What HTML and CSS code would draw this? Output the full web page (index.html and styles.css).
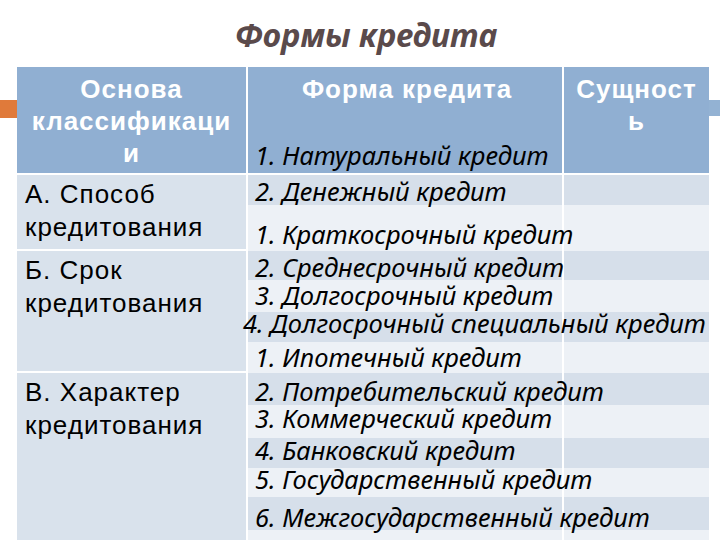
FILE: index.html
```html
<!DOCTYPE html>
<html lang="ru">
<head>
<meta charset="utf-8">
<title>Формы кредита</title>
<link rel="stylesheet" href="styles.css">
</head>
<body>
<div class="slide">
  <h1 class="title">Формы кредита</h1>
  <div class="table-wrap">
    <div class="deco deco-left"></div>
    <div class="deco deco-right"></div>
    <div class="grid">
      <div class="hd hd1">Основа<br>классификаци<br>и</div>
      <div class="hd hd2">
        <div class="hd-title">Форма кредита</div>
        <div class="item head-item">1. Натуральный кредит</div>
      </div>
      <div class="hd hd3">Сущност<br>ь</div>

      <div class="cat cat-a">А. Способ<br>кредитования</div>
      <div class="cat cat-b">Б. Срок<br>кредитования</div>
      <div class="cat cat-c">В. Характер<br>кредитования</div>

      <div class="band dark"><span class="item lift-2">2. Денежный кредит</span></div>
      <div class="side dark"></div>
      <div class="band light"><span class="item lift-5">1. Краткосрочный кредит</span></div>
      <div class="side light"></div>
      <div class="band dark"><span class="item lift-1">2. Среднесрочный кредит</span></div>
      <div class="side dark"></div>
      <div class="band light"><span class="item lift-5">3. Долгосрочный кредит</span></div>
      <div class="side light"></div>
      <div class="band dark"><span class="item lift-7 wide">4. Долгосрочный специальный кредит</span></div>
      <div class="side dark"></div>
      <div class="band light"><span class="item lift-4">1. Ипотечный кредит</span></div>
      <div class="side light"></div>
      <div class="band dark"><span class="item lift-2">2. Потребительский кредит</span></div>
      <div class="side dark"></div>
      <div class="band light"><span class="item lift-8">3. Коммерческий кредит</span></div>
      <div class="side light"></div>
      <div class="band dark"><span class="item lift-6">4. Банковский кредит</span></div>
      <div class="side dark"></div>
      <div class="band light"><span class="item lift-6">5. Государственный кредит</span></div>
      <div class="side light"></div>
      <div class="band dark"><span class="item lift-1">6. Межгосударственный кредит</span></div>
      <div class="side dark"></div>
      <div class="band light"></div>
      <div class="side light"></div>
    </div>
  </div>
</div>
</body>
</html>
```
FILE: styles.css
```css
html, body {
  margin: 0;
  padding: 0;
  background: #ffffff;
}
.slide {
  width: 720px;
  height: 540px;
  overflow: hidden;
}
.title {
  margin: 0;
  height: 67px;
  box-sizing: border-box;
  padding: 15px 0 0 12px;
  text-align: center;
  font-family: "Noto Sans", sans-serif;
  font-style: italic;
  font-weight: 700;
  font-size: 32px;
  line-height: 40px;
  color: #5a4a4b;
}
.table-wrap {
  position: relative;
  padding-left: 17px;
}
.deco {
  position: absolute;
  top: 33px;
  height: 18px;
}
.deco-left {
  left: 0;
  width: 17px;
  background: #e07a3a;
}
.deco-right {
  left: 708px;
  width: 12px;
  height: 16px;
  background: #93b2d3;
}
.grid {
  position: relative;
  display: grid;
  grid-template-columns: 229px 314px 145px;
  grid-template-rows: 108px 30px 46px 29px 32px 30px 31px 32px 33px 30px 29px 33px 12px;
  column-gap: 2px;
  width: 692px;
  background: #ffffff;
}
.hd {
  background: #90afd2;
  border-bottom: 2px solid #ffffff;
  box-sizing: border-box;
  color: #ffffff;
  font-family: "Liberation Sans", Arial, sans-serif;
  font-weight: 700;
  font-size: 26px;
  letter-spacing: 1px;
  line-height: 32px;
  text-align: center;
  padding-top: 6px;
}
.hd1 { grid-column: 1; grid-row: 1; }
.hd2 {
  grid-column: 2;
  grid-row: 1;
  display: flex;
  flex-direction: column;
  justify-content: space-between;
  padding-bottom: 6px;
}
.hd3 { grid-column: 3; grid-row: 1; }
.hd-title {
  padding-left: 4px;
}
.item {
  position: relative;
  z-index: 1;
  font-family: "Noto Sans", sans-serif;
  font-style: italic;
  font-weight: 400;
  font-size: 25.5px;
  letter-spacing: 0;
  line-height: 24px;
  color: #000000;
  white-space: nowrap;
  text-align: left;
}
.head-item {
  padding-left: 7px;
}
.cat {
  grid-column: 1;
  background: #d9e2ec;
  box-sizing: border-box;
  font-family: "Liberation Sans", Arial, sans-serif;
  font-size: 26px;
  letter-spacing: 1px;
  line-height: 33px;
  color: #000000;
  padding: 3px 0 0 8px;
}
.cat-a { grid-row: 2 / 4; border-bottom: 2px solid #ffffff; }
.cat-b { grid-row: 4 / 8; border-bottom: 2px solid #ffffff; }
.cat-c { grid-row: 8 / 14; }
.band {
  grid-column: 2;
  display: flex;
  align-items: flex-end;
  padding-left: 7px;
}
.side {
  grid-column: 3;
}
.dark { background: #d6dfea; }
.light { background: #edf1f6; }
.wide {
  margin-left: -12px;
}
.lift-1 { padding-bottom: 1px; }
.lift-2 { padding-bottom: 2px; }
.lift-4 { padding-bottom: 4px; }
.lift-5 { padding-bottom: 5px; }
.lift-6 { padding-bottom: 6px; }
.lift-7 { padding-bottom: 7px; }
.lift-8 { padding-bottom: 8px; }
```
